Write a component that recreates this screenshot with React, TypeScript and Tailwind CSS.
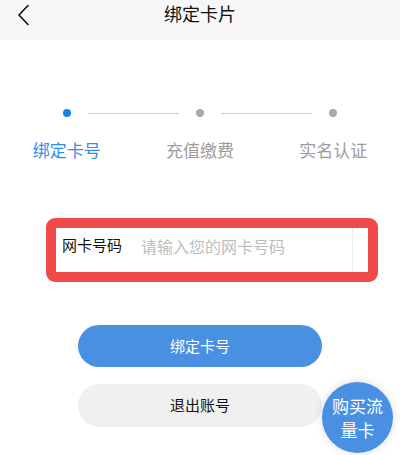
const font = { fontFamily: '"Noto Sans CJK SC", "Noto Sans", sans-serif' };

function Steps() {
    const labels = ['绑定卡号', '充值缴费', '实名认证'];
    return (
        <div className="mt-[69px]">
            <div className="flex items-center px-[63px]">
                <span className="h-2 w-2 rounded-full bg-[#1682f0]" />
                <span className="mx-[17px] h-px flex-1 bg-[#cfcfcf]" />
                <span className="h-2 w-2 rounded-full bg-[#a9a9a9]" />
                <span className="mx-[17px] h-px flex-1 bg-[#cfcfcf]" />
                <span className="h-2 w-2 rounded-full bg-[#a9a9a9]" />
            </div>
            <div className="mt-[21px] grid grid-cols-3 text-center text-[17px] leading-6">
                {labels.map((label, i) => (
                    <span
                        key={label}
                        className={i === 0 ? 'text-[#2f8ef0]' : 'text-[#9d9d9d]'}
                    >
                        {label}
                    </span>
                ))}
            </div>
        </div>
    );
}

export default function App() {
    return (
        <div className="relative h-[455px] w-[400px] overflow-hidden bg-white" style={font}>
            {/* header */}
            <div className="relative flex h-10 items-center justify-center bg-[#f7f7f7]">
                <svg
                    className="absolute left-[15px] top-[4px]"
                    width="18"
                    height="22"
                    viewBox="0 0 18 22"
                    fill="none"
                    stroke="#111"
                    strokeWidth="1.6"
                    strokeLinecap="round"
                    strokeLinejoin="round"
                >
                    <path d="M13 1.5 L4 11 L13 20.5" />
                </svg>
                <span className="-mt-[13px] text-[18px] text-[#111]">绑定卡片</span>
            </div>

            <Steps />

            {/* card number input */}
            <div className="ml-[46px] mt-[56px] w-[332px] rounded-[9px] border-[10px] border-[#f04a4a]">
                <div className="flex h-11 items-center bg-white pl-[6px]">
                    <span className="mb-[9px] w-[62px] text-[15px] text-[#111]">网卡号码</span>
                    <span className="mb-[9px] ml-[17px] flex-1 text-[16px] text-[#bdbdbd]">请输入您的网卡号码</span>
                    <span className="mr-[15px] h-full w-px bg-[#ececec]" />
                </div>
            </div>

            {/* actions */}
            <div className="ml-[78px] mt-[43px] flex w-[244px] flex-col gap-[17px]">
                <button className="h-[42px] rounded-full bg-[#4a90e2] text-[15px] text-white">
                    绑定卡号
                </button>
                <button className="h-[43px] rounded-full bg-[#f0f0f0] text-[15px] text-[#111]">
                    退出账号
                </button>
            </div>

            <button className="absolute left-[322px] top-[382px] flex h-[71px] w-[71px] flex-col items-center justify-center rounded-full bg-[#4a90e2] text-[17px] leading-6 text-white shadow-[0_0_10px_rgba(0,0,0,0.15)]">
                <span>购买流</span>
                <span>量卡</span>
            </button>
        </div>
    );
}
